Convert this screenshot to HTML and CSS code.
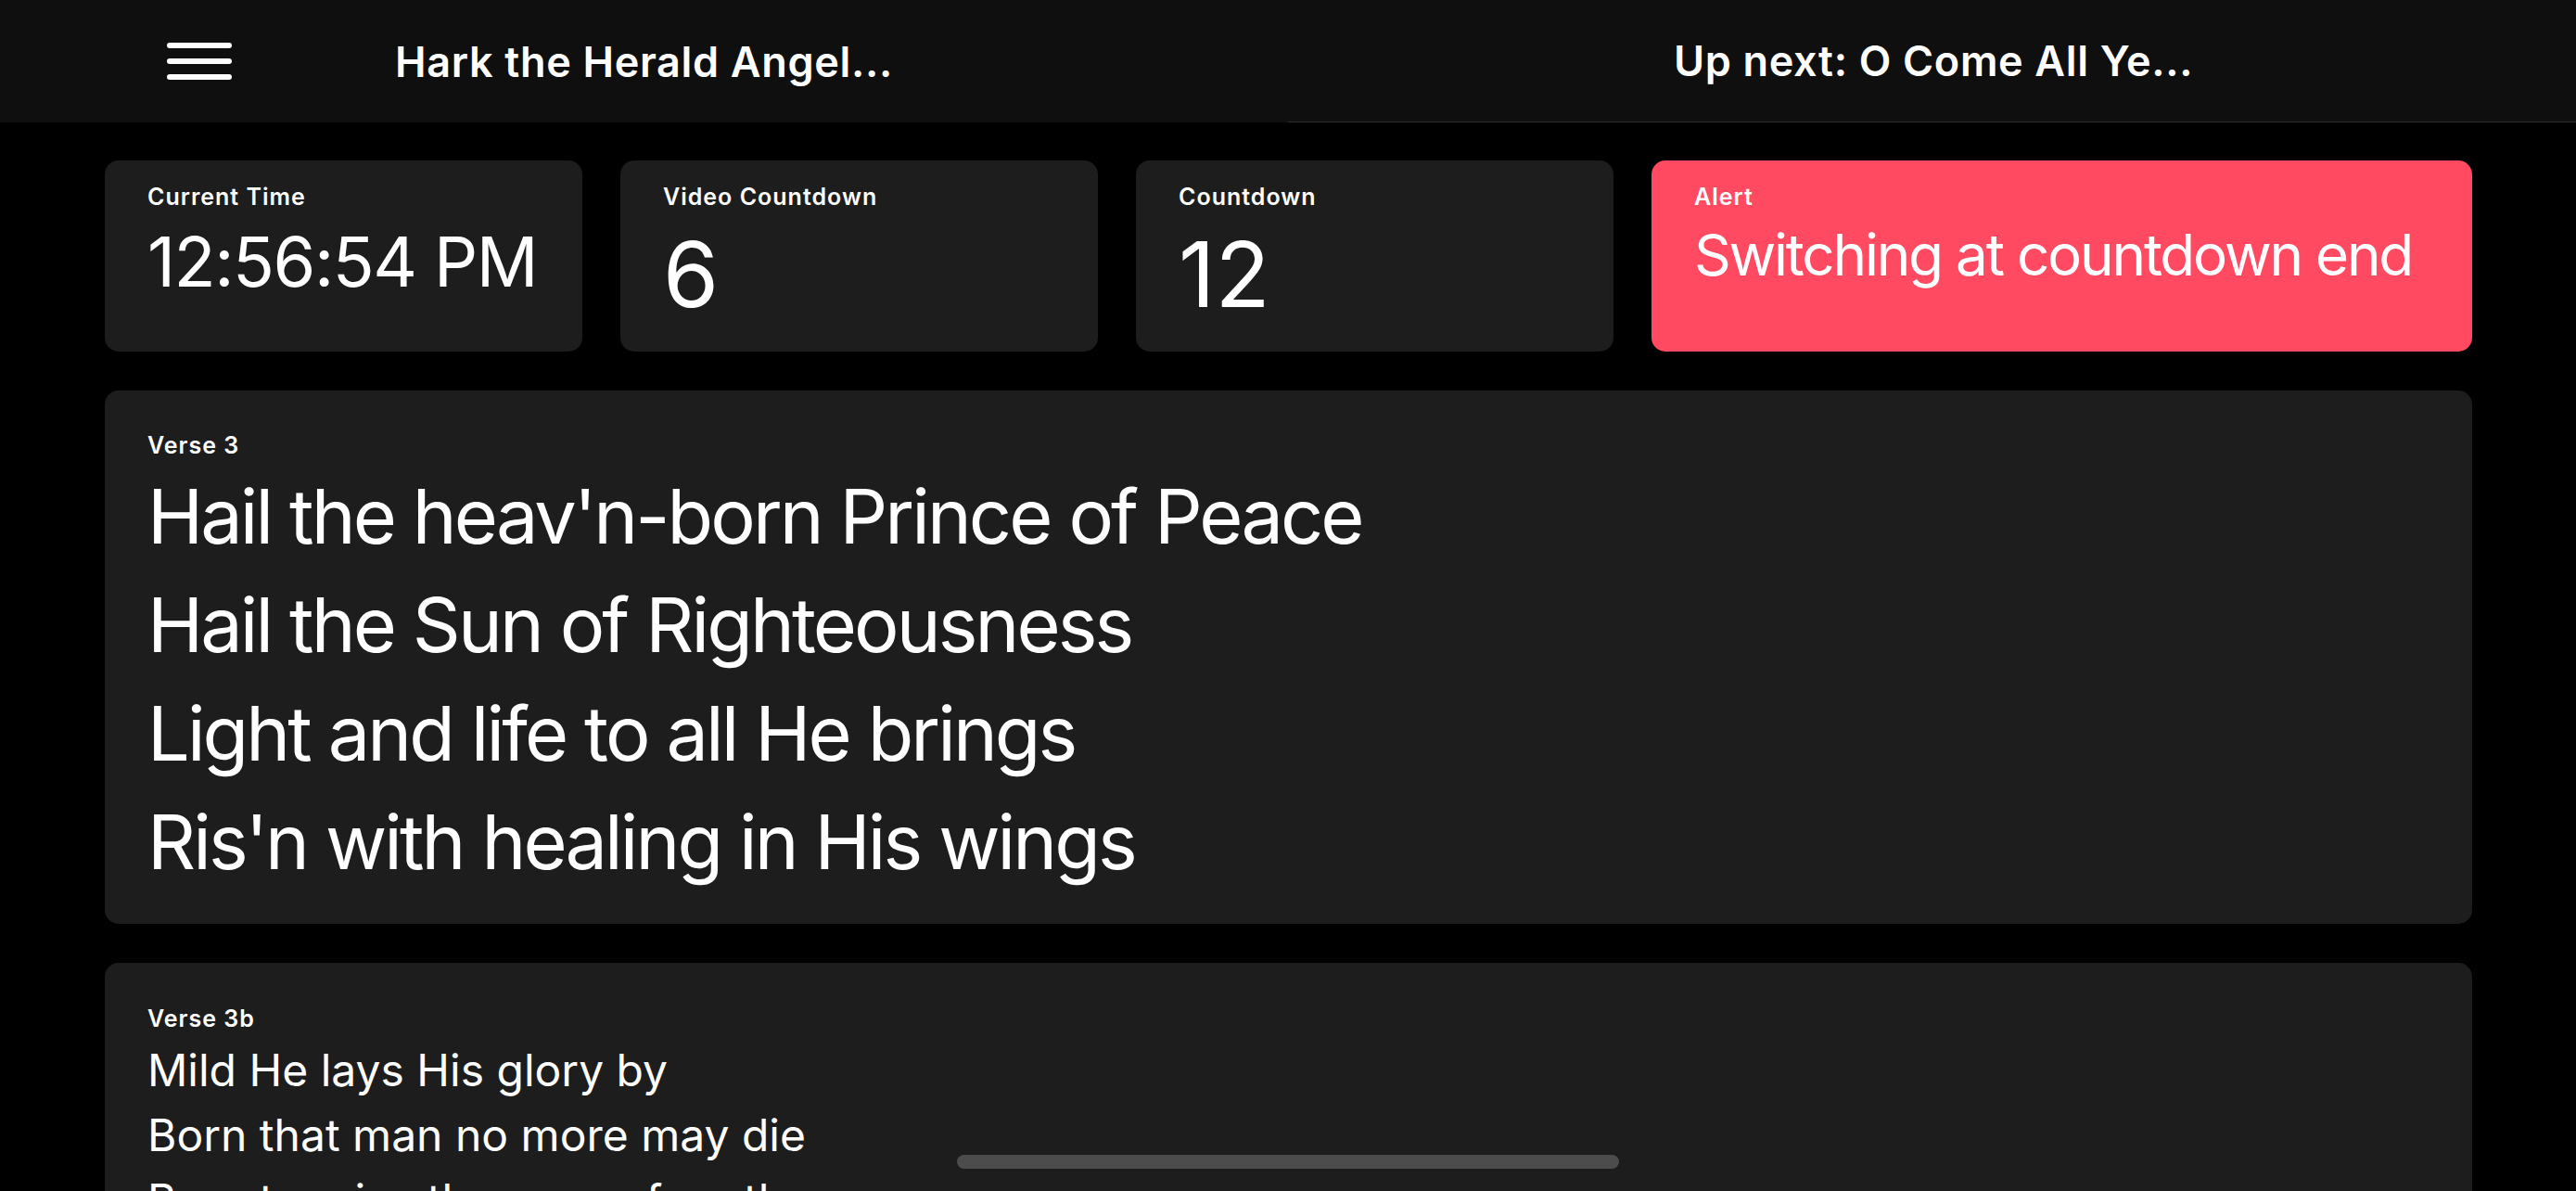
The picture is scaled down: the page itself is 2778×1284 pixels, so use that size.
FILE: index.html
```html
<!DOCTYPE html>
<html lang="en">
<head>
  <meta charset="UTF-8">
  <meta name="viewport" content="width=device-width, initial-scale=1.0">
  <title>Stage Display</title>
  <link rel="stylesheet" href="styles.css">
</head>
<body>

<div class="page">
  <header class="topbar">
    <div class="topbar-left">
      <button class="menu-btn" aria-label="Menu">
        <span></span><span></span><span></span>
      </button>
      <h1 class="song-title">Hark the Herald Angel...</h1>
    </div>
    <div class="topbar-right">
      <h2 class="song-title">Up next: O Come All Ye...</h2>
    </div>
  </header>

  <main class="content">
    <!-- Timers -->
    <div class="stats">
      <div class="stat-card">
        <div class="label">Current Time</div>
        <div class="value value-time">12:56:54 PM</div>
      </div>
      <div class="stat-card">
        <div class="label">Video Countdown</div>
        <div class="value value-big">6</div>
      </div>
      <div class="stat-card">
        <div class="label">Countdown</div>
        <div class="value value-big">12</div>
      </div>
      <div class="stat-card alert">
        <div class="label">Alert</div>
        <div class="value value-alert">Switching at countdown end</div>
      </div>
    </div>

    <!-- Current slide -->
    <section class="slide current">
      <div class="label">Verse 3</div>
      <div class="lyrics">
        <p>Hail the heav'n-born Prince of Peace</p>
        <p>Hail the Sun of Righteousness</p>
        <p>Light and life to all He brings</p>
        <p>Ris'n with healing in His wings</p>
      </div>
    </section>

    <!-- Next slide -->
    <section class="slide next">
      <div class="label">Verse 3b</div>
      <div class="lyrics">
        <p>Mild He lays His glory by</p>
        <p>Born that man no more may die</p>
        <p>Born to raise the sons of earth</p>
        <p>Born to give them second birth</p>
      </div>
    </section>
  </main>

  <div class="scroll-indicator"></div>
</div>

</body>
</html>
```

FILE: styles.css
```css
body {
  margin: 0;
  padding: 0;
  background-color: #000;
  color: #fff;
  font-family: Inter, "Noto Sans", Arial, sans-serif;
}
.page {
  height: 100vh;
  overflow: hidden;
}
.topbar {
  display: grid;
  grid-template-columns: 1389px 1fr;
  height: 132px;
  background-color: #0f0f0f;
}
.topbar-left {
  display: flex;
  align-items: center;
  padding-left: 180px;
}
.topbar-right {
  display: flex;
  align-items: center;
  padding-left: 416px;
  border-bottom: 1px solid #2e2e2e;
}
.menu-btn {
  display: flex;
  flex-direction: column;
  justify-content: space-between;
  width: 70px;
  height: 40px;
  padding: 0;
  margin: 0 176px 0 0;
  background: none;
  border: none;
}
.menu-btn span {
  display: block;
  height: 6px;
  background-color: #fff;
  border-radius: 3px;
}
.song-title {
  margin: 0;
  font-size: 45px;
  font-weight: 600;
  line-height: normal;
  letter-spacing: 0.015em;
  white-space: nowrap;
}
.content {
  padding: 41px 112px 0 113px;
}
.stats {
  display: grid;
  grid-template-columns: 515px 515px 515px 1fr;
  gap: 41px;
}
.stat-card {
  background-color: #1d1d1d;
  border-radius: 15px;
  padding: 24px 46px 25px;
}
.stat-card.alert {
  background-color: #ff4a62;
}
.label {
  font-size: 25px;
  font-weight: 600;
  line-height: 30px;
  letter-spacing: 0.04em;
}
.value {
  margin-top: 10px;
  line-height: normal;
  font-weight: 400;
  white-space: nowrap;
}
.value-time {
  font-size: 74px;
  letter-spacing: -0.02em;
}
.value-big {
  font-size: 97px;
}
.value-alert {
  font-size: 62px;
  letter-spacing: -0.036em;
}
.slide {
  margin-top: 42px;
  background-color: #1d1d1d;
  border-radius: 15px;
  padding: 44px 46px 29px;
}
.lyrics {
  margin-top: 4px;
}
.lyrics p {
  margin: 0;
  white-space: nowrap;
}
.current .lyrics p {
  font-size: 81px;
  line-height: 117px;
  letter-spacing: -0.036em;
}
.next {
  padding-top: 45px;
}
.next .lyrics {
  margin-top: 6px;
}
.next .lyrics p {
  font-size: 48px;
  line-height: 70px;
}
.scroll-indicator {
  position: fixed;
  left: 50%;
  bottom: 24px;
  width: 714px;
  height: 15px;
  margin-left: -357px;
  background-color: #4c4c4c;
  border-radius: 8px;
}
```
